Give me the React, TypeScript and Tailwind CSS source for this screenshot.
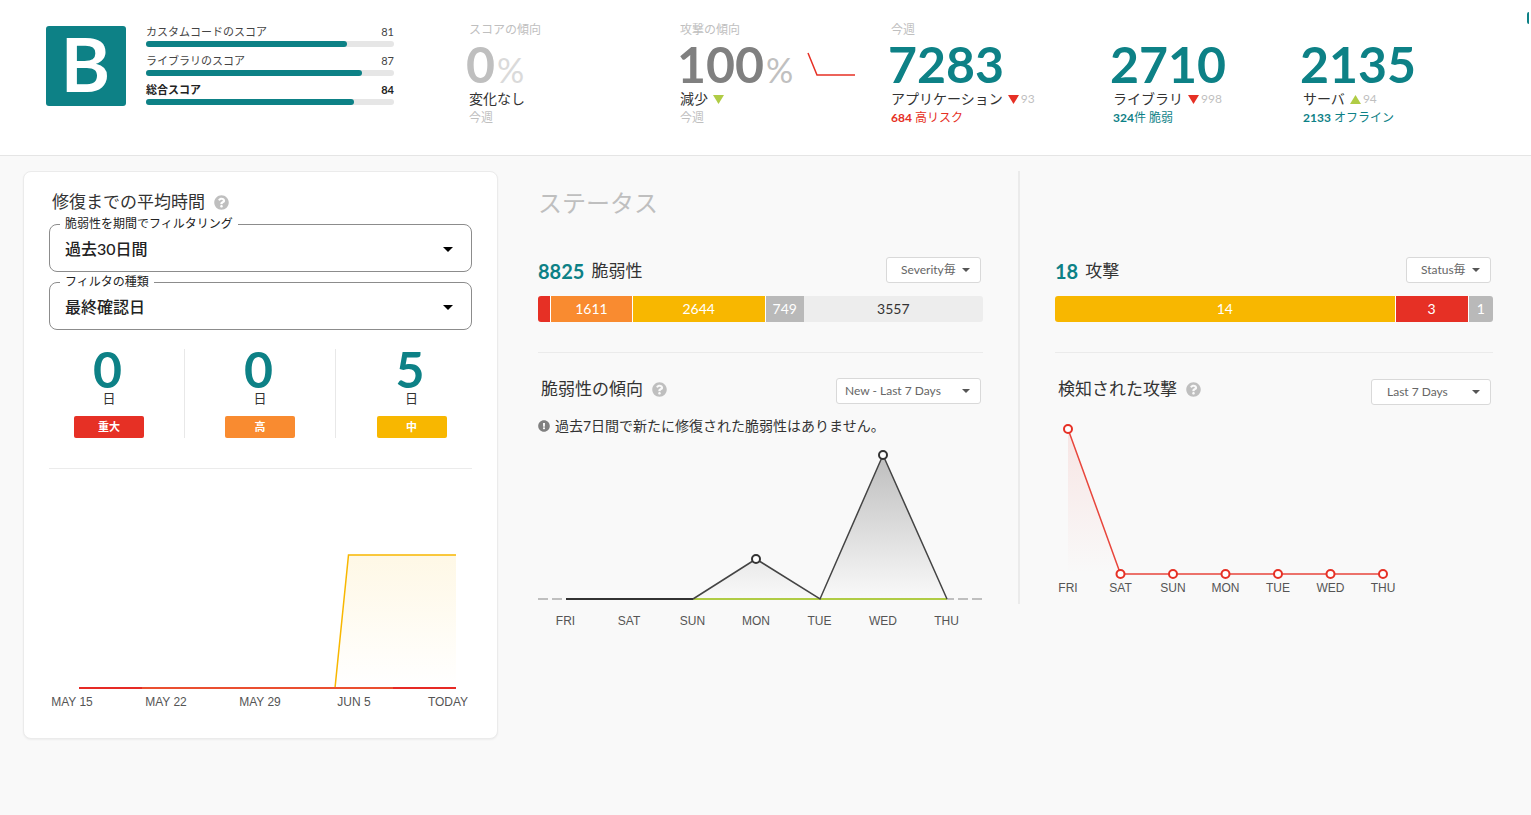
import type { ReactNode } from 'react';
import { FaExclamationCircle, FaQuestionCircle } from 'react-icons/fa';

const SCORES = [
  { label: 'カスタムコードのスコア', value: 81, strong: false },
  { label: 'ライブラリのスコア', value: 87, strong: false },
  { label: '総合スコア', value: 84, strong: true },
];

const VULNERABILITIES = [
  { value: 264, showValue: false, className: 'bg-[#e63025] text-white border-r' },
  { value: 1611, showValue: true, className: 'bg-[#f98b30] text-white border-r' },
  { value: 2644, showValue: true, className: 'bg-[#f8b700] text-white border-r' },
  { value: 749, showValue: true, className: 'bg-[#b9b9b9] text-white' },
  { value: 3557, showValue: true, className: 'bg-[#ededed] text-[#333]' },
];

const ATTACKS = [
  { value: 14, showValue: true, className: 'bg-[#f8b700] text-white border-r' },
  { value: 3, showValue: true, className: 'bg-[#e63025] text-white border-r' },
  { value: 1, showValue: true, className: 'bg-[#b9b9b9] text-white' },
];

const REPAIR_TIMES = [
  { days: 0, label: '重大', className: 'bg-[#e63025]' },
  { days: 0, label: '高', className: 'bg-[#f98b30]' },
  { days: 5, label: '中', className: 'bg-[#f8b700]' },
];

const DAYS = ['FRI', 'SAT', 'SUN', 'MON', 'TUE', 'WED', 'THU'];

type Segment = { value: number; showValue: boolean; className: string };

function Triangle({ up, className }: { up?: boolean; className: string }) {
  return (
    <svg width="11" height="9" viewBox="0 0 11 9" className={className}>
      <path d={up ? 'M0 9 L5.5 0 L11 9 Z' : 'M0 0 L11 0 L5.5 9 Z'} fill="currentColor" />
    </svg>
  );
}

function Metric({ label, value, children }: { label?: string; value: ReactNode; children: ReactNode }) {
  return (
    <div className="whitespace-nowrap">
      <div className="h-[18px] text-xs leading-[18px] text-[#bfbfbf]">{label}</div>
      <div className="-ml-[3px] flex h-[50px] text-[50px] font-bold leading-[50px] text-[#0d8186]">{value}</div>
      {children}
    </div>
  );
}

function MetricName({ children }: { children: ReactNode }) {
  return <div className="flex h-5 items-center text-sm leading-5 text-[#333]">{children}</div>;
}

function StackedBar({ segments }: { segments: Segment[] }) {
  const total = segments.reduce((sum, s) => sum + s.value, 0);
  return (
    <div className="flex h-[26px] overflow-hidden rounded-[3px] text-sm leading-[26px]">
      {segments.map((s) => (
        <div key={s.value} className={`border-white text-center ${s.className}`} style={{ width: `${(s.value / total) * 100}%` }}>
          {s.showValue && s.value}
        </div>
      ))}
    </div>
  );
}

function OutlinedSelect({ id, label, value }: { id: string; label: string; value: string }) {
  return (
    <fieldset className="mx-[15px] mt-[3px] rounded-lg border border-[#8c8c8c] pb-1">
      <legend className="ml-[10px] px-[5px] text-xs leading-[14px] text-[#222]">
        <label htmlFor={id}>{label}</label>
      </legend>
      <div className="relative">
        <select id={id} className="h-9 w-full appearance-none bg-transparent pl-[15px] font-medium text-[#222] outline-none">
          <option>{value}</option>
        </select>
        <svg width="10" height="5" viewBox="0 0 10 5" className="pointer-events-none absolute right-[18px] top-4">
          <path d="M0 0 H10 L5 5 Z" fill="#000" />
        </svg>
      </div>
    </fieldset>
  );
}

function SmallSelect({ label, value, className }: { label: string; value: string; className: string }) {
  return (
    <div className="relative mr-[2px] shrink-0">
      <select
        aria-label={label}
        className={`h-[26px] appearance-none rounded-[3px] border border-[#d9d9d9] bg-white text-xs text-[#666] outline-none ${className}`}
      >
        <option>{value}</option>
      </select>
      <svg width="8" height="4" viewBox="0 0 8 4" className="pointer-events-none absolute right-[11px] top-3">
        <path d="M0 0 H8 L4 4 Z" fill="#555" />
      </svg>
    </div>
  );
}

function RepairTimeChart() {
  return (
    <svg viewBox="0 0 423 250" className="block h-auto w-full">
      <defs>
        <linearGradient id="repair-fill" x1="0" y1="0" x2="0" y2="1">
          <stop offset="0" stopColor="#f8b700" stopOpacity="0.1" />
          <stop offset="1" stopColor="#f8b700" stopOpacity="0" />
        </linearGradient>
      </defs>
      <path d="M286 219 L299.5 86 H407 V219 Z" fill="url(#repair-fill)" />
      <path d="M286 219 L299.5 86 H407" fill="none" stroke="#f8b700" strokeWidth="1.5" />
      <path d="M30 219 H407" stroke="#ea4f30" strokeWidth="2" />
      <path d="M30 219 H93 M344 219 H407" stroke="#e62a25" strokeWidth="2" />
      <g className="fill-[#555] text-[12px] [font-family:'Liberation_Sans',sans-serif]" textAnchor="middle">
        {['MAY 15', 'MAY 22', 'MAY 29', 'JUN 5', 'TODAY'].map((d, i) => (
          <text key={d} x={23 + i * 94} y="237">{d}</text>
        ))}
      </g>
    </svg>
  );
}

function VulnerabilityChart() {
  return (
    <svg viewBox="0 0 445 192" className="block h-auto w-full">
      <defs>
        <linearGradient id="vuln-fill" gradientUnits="userSpaceOnUse" x1="0" y1="15" x2="0" y2="159">
          <stop offset="0" stopColor="#333" stopOpacity="0.3" />
          <stop offset="1" stopColor="#333" stopOpacity="0" />
        </linearGradient>
      </defs>
      <path d="M0 159 H445" stroke="#bfbfbf" strokeWidth="2" strokeDasharray="10 4" />
      <path d="M155 159 L218 119 L282 159 L345 15 L409 159 Z" fill="url(#vuln-fill)" />
      <path d="M155 159 H409" stroke="#b0cc45" strokeWidth="2" />
      <path d="M28 159 H155" stroke="#333" strokeWidth="2" />
      <path d="M155 159 L218 119 L282 159 L345 15 L409 159" fill="none" stroke="#444" strokeWidth="1.5" />
      <circle cx="218" cy="119" r="4" fill="#fff" stroke="#333" strokeWidth="2" />
      <circle cx="345" cy="15" r="4" fill="#fff" stroke="#333" strokeWidth="2" />
      <g className="fill-[#555] text-[12px] [font-family:'Liberation_Sans',sans-serif]" textAnchor="middle">
        {DAYS.map((d, i) => (
          <text key={d} x={27.5 + i * 63.5} y="185">{d}</text>
        ))}
      </g>
    </svg>
  );
}

function AttackChart() {
  return (
    <svg viewBox="0 0 438 189" className="block h-auto w-full">
      <defs>
        <linearGradient id="attack-fill" x1="0" y1="0" x2="0" y2="1">
          <stop offset="0" stopColor="#e63025" stopOpacity="0.1" />
          <stop offset="1" stopColor="#e63025" stopOpacity="0" />
        </linearGradient>
      </defs>
      <path d="M13 14 L65.5 159 H13 Z" fill="url(#attack-fill)" />
      <path d="M13 14 L65.5 159 H328" fill="none" stroke="#e8463c" strokeWidth="1.5" />
      {DAYS.map((d, i) => (
        <circle key={d} cx={13 + i * 52.5} cy={i === 0 ? 14 : 159} r="4" fill="#fff" stroke="#e63025" strokeWidth="2" />
      ))}
      <g className="fill-[#555] text-[12px] [font-family:'Liberation_Sans',sans-serif]" textAnchor="middle">
        {DAYS.map((d, i) => (
          <text key={d} x={13 + i * 52.5} y="177">{d}</text>
        ))}
      </g>
    </svg>
  );
}

function Header() {
  return (
    <header className="relative grid h-[156px] grid-cols-[423fr_211fr_211fr_222fr_190fr_228fr] overflow-hidden border-b border-[#e5e5e5] bg-white pl-[46px] pt-[21px]">
      <div className="flex gap-5 pt-[5px]">
        <div className="h-20 w-20 rounded-[3px] bg-[#0d8186] pr-px text-center text-[75px] font-bold leading-[74px] text-white">B</div>
        <div className="-mt-px flex w-[248px] flex-col gap-[7px]">
          {SCORES.map((s) => (
            <div key={s.label} className="flex flex-col gap-[2px]">
              <div className={`flex justify-between text-[11px] leading-[14px] ${s.strong ? 'font-bold text-[#222]' : 'text-[#444]'}`}>
                <span>{s.label}</span>
                <span>{s.value}</span>
              </div>
              <div className="h-[6px] rounded-full bg-[#e6e6e6]">
                <div className="h-full rounded-full bg-[#0d8186]" style={{ width: `${s.value}%` }} />
              </div>
            </div>
          ))}
        </div>
      </div>

      <Metric
        label="スコアの傾向"
        value={
          <div className="text-[#bfbfbf]">
            0<span className="ml-[2px] text-[34px] font-normal text-[#dadada]">%</span>
          </div>
        }
      >
        <MetricName>変化なし</MetricName>
        <div className="text-xs leading-[18px] text-[#bfbfbf]">今週</div>
      </Metric>

      <Metric
        label="攻撃の傾向"
        value={
          <>
            <div className="text-[#808080]">
              100<span className="ml-[2px] text-[34px] font-normal text-[#c0c0c0]">%</span>
            </div>
            <svg width="48" height="24" viewBox="0 0 48 24" className="ml-[14px] mt-[13px]">
              <path d="M1 1 L10 23 H48" fill="none" stroke="#e63025" strokeWidth="1.5" />
            </svg>
          </>
        }
      >
        <MetricName>
          減少 <Triangle className="ml-[5px] text-[#b0cc45]" />
        </MetricName>
        <div className="text-xs leading-[18px] text-[#bfbfbf]">今週</div>
      </Metric>

      <Metric label="今週" value="7283">
        <MetricName>
          アプリケーション <Triangle className="ml-[5px] text-[#e63025]" />
          <span className="ml-[2px] text-xs text-[#bfbfbf]">93</span>
        </MetricName>
        <a href="#risk" className="block text-xs leading-[18px] text-[#e63025]">
          <b>684</b> 高リスク
        </a>
      </Metric>

      <Metric value="2710">
        <MetricName>
          ライブラリ <Triangle className="ml-[5px] text-[#e63025]" />
          <span className="ml-[2px] text-xs text-[#bfbfbf]">998</span>
        </MetricName>
        <a href="#vulnerable" className="block text-xs leading-[18px] text-[#0d8186]">
          <b>324</b>件 脆弱
        </a>
      </Metric>

      <Metric value="2135">
        <MetricName>
          サーバ <Triangle up className="ml-[5px] text-[#b0cc45]" />
          <span className="ml-[2px] text-xs text-[#bfbfbf]">94</span>
        </MetricName>
        <a href="#offline" className="block text-xs leading-[18px] text-[#0d8186]">
          <b>2133</b> オフライン
        </a>
      </Metric>

      {/* Edge of the drawer handle */}
      <div className="absolute right-[2px] top-3 h-3 w-[2px] rounded-l-full bg-[#0d8186]" />
    </header>
  );
}

export default function App() {
  return (
    <div className="min-h-screen bg-[#f9f9f9] text-[#333] [font-family:Lato,'Noto_Sans_CJK_JP',sans-serif]">
      <Header />

      <main className="grid grid-cols-[minmax(0,475fr)_minmax(0,520fr)_minmax(0,475fr)] items-start pl-[23px] pr-[38px] pt-[15px]">
        <section className="rounded-lg border border-[#ebebeb] bg-white px-[10px] pb-[19px] pt-[18px] shadow-xs">
          <h2 className="flex h-6 items-center gap-[9px] pl-[18px] text-[17px] leading-6">
            修復までの平均時間 <FaQuestionCircle size={15} className="text-[#bfbfbf]" />
          </h2>
          <OutlinedSelect id="period" label="脆弱性を期間でフィルタリング" value="過去30日間" />
          <OutlinedSelect id="filter-type" label="フィルタの種類" value="最終確認日" />

          <div className="mt-[19px] grid grid-cols-3 divide-x divide-[#e8e8e8]">
            {REPAIR_TIMES.map((r) => (
              <div key={r.label} className="flex flex-col items-center">
                <div className="h-[41px] pr-[3px] text-[50px] font-bold leading-[40px] text-[#0d8186]">{r.days}</div>
                <div className="h-[26px] text-[13px] leading-4">日</div>
                <div className={`h-[22px] w-[70px] rounded-[2px] text-center text-[11px] font-bold leading-[22px] text-white ${r.className}`}>
                  {r.label}
                </div>
              </div>
            ))}
          </div>

          <div className="mx-[15px] mt-[30px] border-t border-[#ebebeb]">
            <RepairTimeChart />
          </div>
        </section>

        <section className="pl-10 pr-[35px]">
          <h1 className="mt-4 h-8 text-2xl leading-8 text-[#bfbfbf]">ステータス</h1>
          <div className="mt-[37px] flex h-[26px] items-start justify-between">
            <h2 className="flex items-center gap-[7px] text-[17px] leading-[30px]">
              <b className="text-xl leading-[30px] text-[#0d8186]">8825</b> 脆弱性
            </h2>
            <SmallSelect label="脆弱性の分類" value="Severity毎" className="w-[95px] pl-[14px]" />
          </div>
          <div className="mt-[14px]">
            <StackedBar segments={VULNERABILITIES} />
          </div>
          <div className="mt-[30px] flex items-start justify-between border-t border-[#ebebeb] pt-6">
            <h2 className="flex items-center gap-[9px] pl-[3px] text-[17px] leading-6">
              脆弱性の傾向 <FaQuestionCircle size={15} className="text-[#bfbfbf]" />
            </h2>
            <SmallSelect label="傾向の期間" value="New - Last 7 Days" className="w-[145px] pl-2" />
          </div>
          <p className="mb-1 mt-3 flex h-5 items-center gap-[5px] text-sm">
            <FaExclamationCircle size={12} className="shrink-0 text-[#808080]" />
            過去7日間で新たに修復された脆弱性はありません。
          </p>
          <VulnerabilityChart />
        </section>

        <section className="border-l-2 border-[#ebebeb] pl-[35px] pt-[85px]">
          <div className="flex h-[26px] items-start justify-between">
            <h2 className="flex items-center gap-[7px] text-[17px] leading-[30px]">
              <b className="text-xl leading-[30px] text-[#0d8186]">18</b> 攻撃
            </h2>
            <SmallSelect label="攻撃の分類" value="Status毎" className="w-[85px] pl-[14px]" />
          </div>
          <div className="mt-[14px]">
            <StackedBar segments={ATTACKS} />
          </div>
          <div className="mt-[30px] flex items-start justify-between border-t border-[#ebebeb] pt-6">
            <h2 className="flex items-center gap-[9px] pl-[3px] text-[17px] leading-6">
              検知された攻撃 <FaQuestionCircle size={15} className="text-[#bfbfbf]" />
            </h2>
            <div className="pt-px">
              <SmallSelect label="攻撃の期間" value="Last 7 Days" className="w-[120px] pl-[15px]" />
            </div>
          </div>
          <div className="pt-[10px]">
            <AttackChart />
          </div>
        </section>
      </main>
    </div>
  );
}
